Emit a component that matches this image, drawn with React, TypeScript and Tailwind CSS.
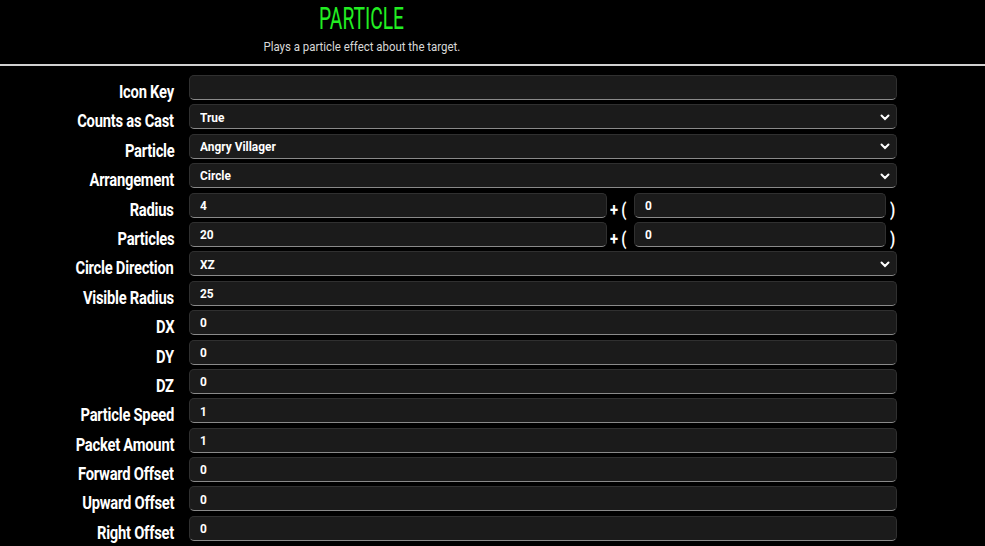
import React from "react"

type Row = {
    label: string
    value: string
    select?: boolean
    extra?: string
}

const rows: Row[] = [
    { label: "Icon Key", value: "" },
    { label: "Counts as Cast", value: "True", select: true },
    { label: "Particle", value: "Angry Villager", select: true },
    { label: "Arrangement", value: "Circle", select: true },
    { label: "Radius", value: "4", extra: "0" },
    { label: "Particles", value: "20", extra: "0" },
    { label: "Circle Direction", value: "XZ", select: true },
    { label: "Visible Radius", value: "25" },
    { label: "DX", value: "0" },
    { label: "DY", value: "0" },
    { label: "DZ", value: "0" },
    { label: "Particle Speed", value: "1" },
    { label: "Packet Amount", value: "1" },
    { label: "Forward Offset", value: "0" },
    { label: "Upward Offset", value: "0" },
    { label: "Right Offset", value: "0" },
]

const roboto = { fontFamily: '"Roboto", "Liberation Sans", sans-serif' }

const Box: React.FC<{ value: string; select?: boolean; className?: string }> = ({ value, select, className }) => {
    return (
        <div
            className={
                "h-[25px] flex items-center justify-between pl-[10px] pr-[4px] rounded-[5px] bg-[#1b1b1b] border border-[#303030] border-b-[#8a8a8a] text-white text-[13.5px] font-bold " +
                (className ?? "")
            }
            style={roboto}
        >
            <span className="leading-none pt-[1px] inline-block origin-left scale-x-[0.88] whitespace-nowrap">{value}</span>
            {select && (
                <svg width="12" height="12" viewBox="0 0 12 12" className="mr-[1px]">
                    <path d="M2.5 4.5 L6 8 L9.5 4.5" stroke="white" strokeWidth="2" fill="none" strokeLinecap="round" />
                </svg>
            )}
        </div>
    )
}

const Label: React.FC<{ text: string }> = ({ text }) => (
    <span className="inline-block whitespace-nowrap scale-x-[0.82] text-[18px] font-bold text-white tracking-[-0.3px]">
        {text}
    </span>
)

export default function App() {
    return (
        <div className="w-[985px] h-[546px] bg-black overflow-hidden" style={roboto}>
            <div className="w-[724px] flex flex-col items-center pt-[3px] h-[64px]">
                <span className="inline-block text-[#22ee22] text-[31px] leading-[32px] scale-x-[0.62] whitespace-nowrap">
                    PARTICLE
                </span>
                <span className="inline-block text-[#d8d8d8] text-[13px] leading-[16px] mt-[4px] scale-x-[0.88] whitespace-nowrap">
                    Plays a particle effect about the target.
                </span>
            </div>
            <div className="h-[2px] bg-[#d0d0d0]" />
            <div className="flex flex-col gap-[4.4px] pt-[9px]">
                {rows.map((row, index) => (
                    <div key={index} className="flex items-center h-[25px]">
                        <div className="w-[174px] text-right pt-[9px] leading-none [&>span]:origin-right">
                            <Label text={row.label} />
                        </div>
                        <div className="ml-[15px] w-[708px] flex items-center">
                            {row.extra === undefined ? (
                                <Box value={row.value} select={row.select} className="w-full" />
                            ) : (
                                <>
                                    <Box value={row.value} className="w-[418px]" />
                                    <div className="w-[27px] pl-[3px] pt-[9px] leading-none [&>span]:origin-left">
                                        <Label text="+ (" />
                                    </div>
                                    <Box value={row.extra} className="w-[252px]" />
                                    <div className="pl-[4px] pt-[9px] leading-none [&>span]:origin-left">
                                        <Label text=")" />
                                    </div>
                                </>
                            )}
                        </div>
                    </div>
                ))}
            </div>
        </div>
    )
}
